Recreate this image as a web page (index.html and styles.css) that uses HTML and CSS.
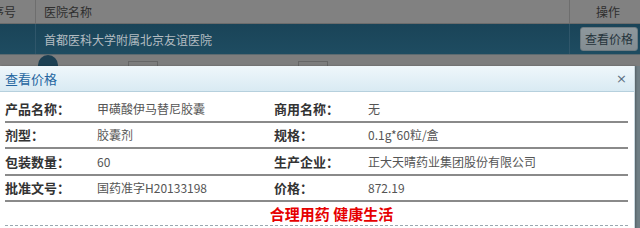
FILE: index.html
```html
<!DOCTYPE html>
<html lang="zh">
<head>
<meta charset="utf-8">
<link rel="stylesheet" href="styles.css">
</head>
<body>
<div class="page">
  <div class="thead">
    <div class="c-no"><span class="no-txt">序号</span></div>
    <div class="c-name">医院名称</div>
    <div class="c-op">操作</div>
  </div>
  <div class="trow">
    <div class="c-no"></div>
    <div class="c-name">首都医科大学附属北京友谊医院</div>
    <div class="c-op"><span class="btn">查看价格</span></div>
  </div>
  <div class="pager">
    <span class="pg-dot"></span>
    <span class="pg-box"></span>
    <span class="pg-box wide"></span>
  </div>
  <div class="side"></div>

  <div class="dialog">
    <div class="dlg-title">
      <span>查看价格</span>
      <span class="close">×</span>
    </div>
    <div class="dlg-body">
      <div class="row">
        <div class="lbl">产品名称：</div><div class="val">甲磺酸伊马替尼胶囊</div>
        <div class="lbl">商用名称：</div><div class="val">无</div>
      </div>
      <div class="row">
        <div class="lbl">剂型：</div><div class="val">胶囊剂</div>
        <div class="lbl">规格：</div><div class="val">0.1g*60粒/盒</div>
      </div>
      <div class="row">
        <div class="lbl">包装数量：</div><div class="val">60</div>
        <div class="lbl">生产企业：</div><div class="val">正大天晴药业集团股份有限公司</div>
      </div>
      <div class="row">
        <div class="lbl">批准文号：</div><div class="val">国药准字H20133198</div>
        <div class="lbl">价格：</div><div class="val">872.19</div>
      </div>
      <div class="slogan">合理用药 健康生活</div>
    </div>
  </div>
</div>
</body>
</html>
```
FILE: styles.css
```css
* { box-sizing: border-box; }
html, body { margin: 0; padding: 0; }
body {
  width: 640px; height: 228px; overflow: hidden;
  font-family: "Noto Sans CJK SC", "Noto Sans", sans-serif;
  background: #7b7b7b;
}
.page { position: relative; width: 640px; height: 228px; }
.thead, .trow { display: grid; grid-template-columns: 36px 533px 71px; }
.thead {
  height: 24px; background: #818181; color: #2e2e2e; font-size: 12px;
  border-bottom: 1px solid #6c6c6c;
}
.thead > div, .trow > div { display: flex; align-items: center; }
.c-no { border-right: 1px solid #6e6e6e; }
.no-txt { white-space: nowrap; margin-left: -8px; }
.c-name { padding-left: 8px; }
.c-op { border-left: 1px solid #6e6e6e; justify-content: center; }
.thead .c-op { padding-left: 6px; }
.trow {
  height: 31px; color: #b3bcc1; font-size: 12px;
  background: linear-gradient(#1a4458, #1e4c61);
  border-bottom: 1px solid #5c6a70;
}
.trow .c-no { border-right: 1px solid #2f566a; }
.trow .c-op { border-left: 1px solid #2f566a; padding-left: 8px; }
.btn {
  display: inline-block; padding: 3px 4px; font-size: 12px; line-height: 16px;
  background: linear-gradient(#8e989d, #838d92); color: #25333b; border-radius: 3px;
  border: 1px solid #6f7b81;
}
.pager {
  height: 12px; background: #7d7d7d; display: flex; align-items: flex-end; gap: 40px;
  padding-left: 38px; overflow: hidden;
}
.pg-dot { width: 20px; height: 12px; border-radius: 10px 10px 0 0; background: #1c3f52; flex: none; }
.pg-box { width: 30px; height: 6px; border: 1px solid #666; border-bottom: none; flex: none; margin-left: 30px; }
.pg-box.wide { margin-left: 100px; }
.side { position: absolute; right: 0; top: 66px; width: 8px; height: 162px; background: #6f7e85; }
.dialog {
  position: absolute; left: 0; top: 66px; width: 635px; height: 170px;
  background: #fff; border-right: 1px solid #c9d8df;
  box-shadow: 1px 0 2px rgba(0,0,0,0.25);
}
.dlg-title {
  height: 26px; display: flex; align-items: center; justify-content: space-between;
  padding: 0 7px 0 5px; font-size: 13px; color: #2566a0;
  background: linear-gradient(#eff7fb, #d9eaf3);
  border-bottom: 1px solid #b6d0dd;
}
.close { color: #5a6f80; font-size: 13px; font-family: "DejaVu Sans", sans-serif; }
.dlg-body { padding: 4px 6px 0 5px; }
.row {
  display: grid; grid-template-columns: 92px 177px 94px 1fr;
  height: 26.5px; align-items: center; border-bottom: 2px solid #8a8a8a;
}
.lbl { font-weight: bold; font-size: 13px; color: #333; }
.val { font-size: 12px; color: #555; }
.slogan {
  text-align: center; color: #e60000; font-weight: bold; font-size: 15px;
  line-height: 20px; padding: 2px 0 0 30px; height: 24px; border-bottom: 1px dashed #9aa8b0;
}
```
